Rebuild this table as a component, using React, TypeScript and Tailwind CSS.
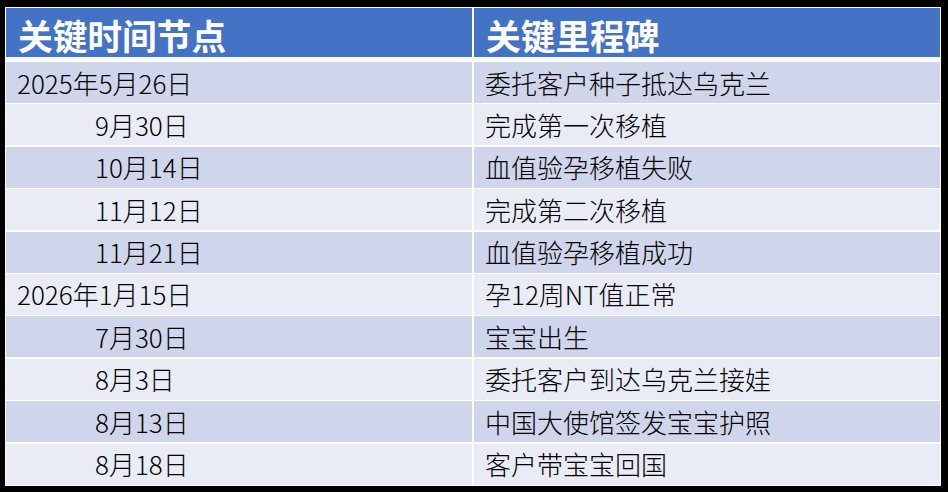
const rows: { date: string; indent: boolean; event: string }[] = [
  { date: '2025年5月26日', indent: false, event: '委托客户种子抵达乌克兰' },
  { date: '9月30日', indent: true, event: '完成第一次移植' },
  { date: '10月14日', indent: true, event: '血值验孕移植失败' },
  { date: '11月12日', indent: true, event: '完成第二次移植' },
  { date: '11月21日', indent: true, event: '血值验孕移植成功' },
  { date: '2026年1月15日', indent: false, event: '孕12周NT值正常' },
  { date: '7月30日', indent: true, event: '宝宝出生' },
  { date: '8月3日', indent: true, event: '委托客户到达乌克兰接娃' },
  { date: '8月13日', indent: true, event: '中国大使馆签发宝宝护照' },
  { date: '8月18日', indent: true, event: '客户带宝宝回国' },
];

export default function App() {
  return (
    <div className="w-[948px] h-[492px] bg-black pt-[7px] pl-[5px] font-['Noto_Sans_CJK_SC','Noto_Sans',sans-serif]">
      <div className="w-[936px] bg-white p-[1px]">
        {/* Header */}
        <div className="grid grid-cols-[466px_1fr] gap-x-[2px] h-[49px]">
          <div className="bg-[#4472C4] flex items-center pl-[12px] pt-[5px] text-white font-bold text-[34.7px] leading-none">
            关键时间节点
          </div>
          <div className="bg-[#4472C4] flex items-center pl-[12px] pt-[5px] text-white font-bold text-[34.7px] leading-none">
            关键里程碑
          </div>
        </div>

        {/* Body */}
        <div className="mt-[5px] grid grid-cols-[466px_1fr] auto-rows-[41px] gap-x-[2px] gap-y-[1.4px]">
          {rows.map((r, i) => {
            const bg = i % 2 === 0 ? 'bg-[#CFD5EA]' : 'bg-[#E9EBF5]';
            return [
              <div
                key={`d${i}`}
                className={`${bg} flex items-center text-[26px] font-light leading-none text-black ${r.indent ? 'pl-[89px]' : 'pl-[11px]'}`}
              >
                {r.date}
              </div>,
              <div key={`e${i}`} className={`${bg} flex items-center pl-[11px] text-[26px] font-light leading-none text-black`}>
                {r.event}
              </div>,
            ];
          })}
        </div>
      </div>
    </div>
  );
}
